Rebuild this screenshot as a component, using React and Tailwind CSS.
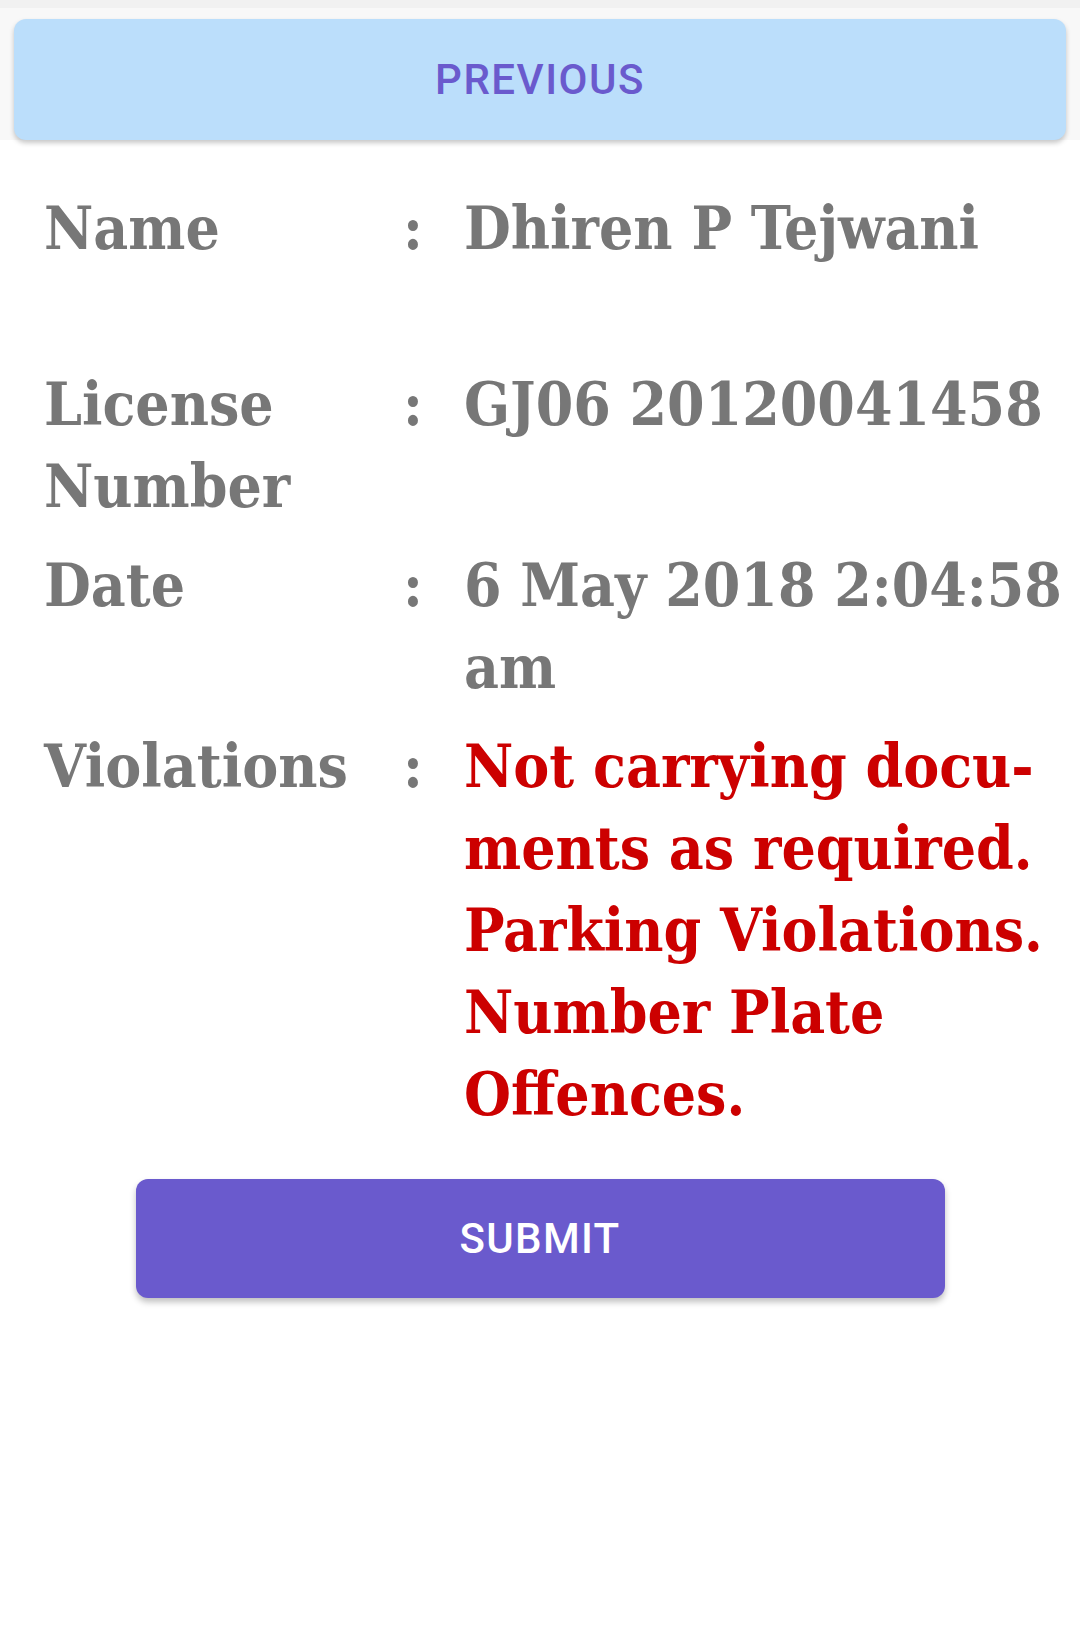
const serif = { fontFamily: '"DejaVu Serif Condensed", "DejaVu Serif", "Liberation Serif", serif' };

// One label : value row of the challan details
function DetailRow({ label, children, tall, valueClass = "text-[#777777]" }) {
  return (
    <div className={`flex mb-[17px] ${tall ? "min-h-[159px]" : ""}`}>
      <div className="w-[359px] shrink-0 text-[#777777]">{label}</div>
      <div className="w-[61px] shrink-0 text-[#777777]">:</div>
      <div className={`flex-1 whitespace-nowrap ${valueClass}`}>{children}</div>
    </div>
  );
}

export default function App() {
  return (
    <div className="w-[1080px] min-h-[1626px] bg-white" style={{ fontFamily: "Roboto, sans-serif" }}>
      {/* Top bar with previous button */}
      <div className="bg-[#f8f8f8] border-t-[8px] border-[#f1f1f1] px-[14px] pt-[11px]">
        <button className="w-full h-[121px] rounded-[12px] bg-[#bbdefb] text-[#6a5acd] text-[42px] font-medium tracking-[1.5px] shadow-[0_3px_5px_rgba(0,0,0,0.22)]">
          PREVIOUS
        </button>
      </div>

      {/* Details */}
      <div
        className="pl-[44px] pr-[20px] pt-[47px] text-[60px] leading-[82px] font-bold font-stretch-condensed"
        style={serif}
      >
        <DetailRow label="Name" tall>
          Dhiren P Tejwani
        </DetailRow>
        <DetailRow label={<>License<br />Number</>}>GJ06 20120041458</DetailRow>
        <DetailRow label="Date">
          6 May 2018 2:04:58
          <br />
          am
        </DetailRow>
        <DetailRow label="Violations" valueClass="text-[#cc0000]">
          <div>Not carrying docu-</div>
          <div>ments as required.</div>
          <div>Parking Violations.</div>
          <div>Number Plate</div>
          <div>Offences.</div>
        </DetailRow>
      </div>

      {/* Submit */}
      <div className="flex justify-center pt-[27px]">
        <button className="w-[809px] h-[119px] rounded-[12px] bg-[#6a5acd] text-white text-[42px] font-medium tracking-[1.3px] shadow-[0_4px_6px_rgba(0,0,0,0.25)]">
          SUBMIT
        </button>
      </div>
    </div>
  );
}
